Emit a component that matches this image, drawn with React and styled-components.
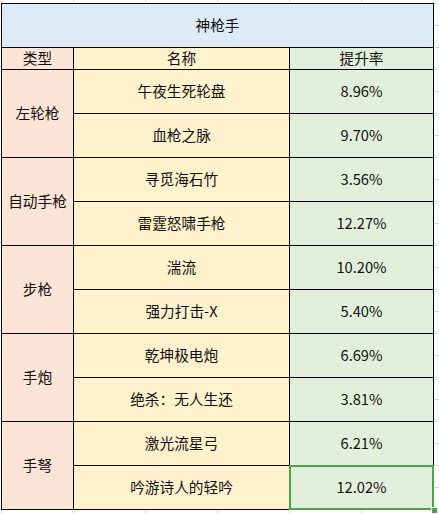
import React from 'react';
import styled, { createGlobalStyle } from 'styled-components';

const GlobalStyle = createGlobalStyle`
  html, body {
    margin: 0;
    padding: 0;
    background: #fff;
  }
  body {
    font-family: "Noto Sans CJK SC", "Noto Sans", sans-serif;
    color: #111;
  }
`;

// spreadsheet background: 72px columns, 22px rows
const Sheet = styled.div`
  min-height: 514px;
  padding: 3px 0 0 1px;
  box-sizing: border-box;
  background-color: #fff;
  background-image:
    repeating-linear-gradient(to right, #dcdcdc 0 1px, transparent 1px 72px),
    repeating-linear-gradient(to bottom, #dcdcdc 0 1px, transparent 1px 22px);
  background-position: 1px 0, 0 3px;
`;

const Table = styled.div`
  display: grid;
  grid-template-columns: 71px 215px 143px;
  grid-template-rows: 43px 21px repeat(10, 43px);
  gap: 1px;
  width: max-content;
  background: #000;
  border: 1px solid #000;
`;

const bgs = {
  title: '#ddebf7',
  type: '#fce4d6',
  name: '#fff2cc',
  rate: '#e2efda',
};

const Cell = styled.div`
  position: relative;
  display: flex;
  align-items: center;
  justify-content: center;
  background: ${p => bgs[p.$kind]};
  font-size: 14.67px;
  line-height: 1;
  grid-column: ${p => p.$col || 'auto'};
  grid-row: ${p => p.$span ? `span ${p.$span}` : 'auto'};
  white-space: nowrap;
`;

const Selection = styled.div`
  position: absolute;
  top: -1px;
  left: -1px;
  right: -1px;
  bottom: -1px;
  border: 2px solid #4aa64a;
  pointer-events: none;

  &::after {
    content: '';
    position: absolute;
    right: -5px;
    bottom: -5px;
    width: 5px;
    height: 5px;
    background: #4aa64a;
    border: 1px solid #fff;
    border-right: none;
    border-bottom: none;
  }
`;

const groups = [
  { type: '左轮枪', items: [['午夜生死轮盘', '8.96%'], ['血枪之脉', '9.70%']] },
  { type: '自动手枪', items: [['寻觅海石竹', '3.56%'], ['雷霆怒啸手枪', '12.27%']] },
  { type: '步枪', items: [['湍流', '10.20%'], ['强力打击-X', '5.40%']] },
  { type: '手炮', items: [['乾坤极电炮', '6.69%'], ['绝杀：无人生还', '3.81%']] },
  { type: '手弩', items: [['激光流星弓', '6.21%'], ['吟游诗人的轻吟', '12.02%']] },
];

export default function App() {
  return (
    <Sheet>
      <GlobalStyle />
      <Table>
        <Cell $kind="title" $col="1 / 4">神枪手</Cell>
        <Cell $kind="type">类型</Cell>
        <Cell $kind="name">名称</Cell>
        <Cell $kind="rate">提升率</Cell>
        {groups.map((g, gi) =>
          g.items.map(([name, rate], i) => (
            <React.Fragment key={name}>
              {i === 0 && (
                <Cell $kind="type" $col="1" $span={g.items.length}>{g.type}</Cell>
              )}
              <Cell $kind="name" $col="2">{name}</Cell>
              <Cell $kind="rate" $col="3">
                {rate}
                {gi === groups.length - 1 && i === g.items.length - 1 && <Selection />}
              </Cell>
            </React.Fragment>
          ))
        )}
      </Table>
    </Sheet>
  );
}
